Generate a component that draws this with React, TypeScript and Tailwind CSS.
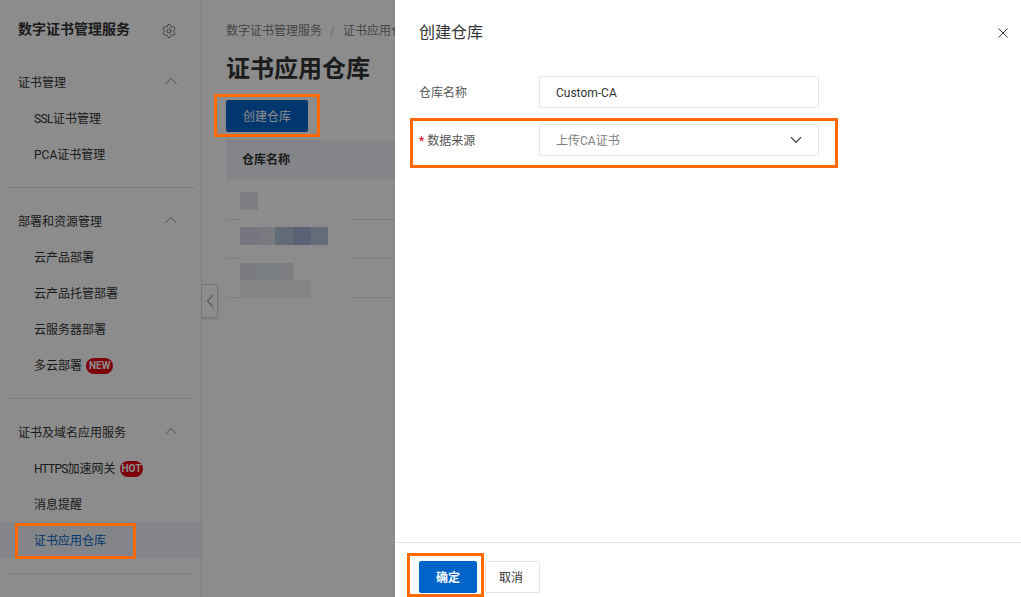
import React from "react";
import { Settings } from "lucide-react";

const font = { fontFamily: '"Roboto","Noto Sans CJK SC",sans-serif' };

function Up() {
  return (
    <svg width="12" height="8" viewBox="0 0 12 8" fill="none" stroke="#8a8a8a" strokeWidth="1" className="mb-[4px]">
      <path d="M0.5 7 L6 1.5 L11.5 7" />
    </svg>
  );
}

function Item({ label, active, badge, latin, tight }: { label: string; active?: boolean; badge?: string; latin?: string; tight?: string }) {
  return (
    <div className={`h-9 pt-[2px] flex items-center pl-[34px] text-[12px] ${active ? "bg-[#eff3f8] text-[#0064c8]" : "text-[#333]"}`}>
      <span>
        {latin && <span className={tight}>{latin}</span>}
        {label}
      </span>
      {badge && (
        <span className={`ml-[4px] h-[16px] rounded-full bg-[#e60012] text-white text-[10px] font-bold flex items-center leading-none ${badge === "HOT" ? "px-[2px]" : "px-[3px]"}`}>{badge}</span>
      )}
    </div>
  );
}

function Group({ title, children }: { title: string; children: React.ReactNode }) {
  return (
    <div>
      <div className="h-9 pt-[2px] flex items-center justify-between pl-[18px] pr-[24px] text-[12px] text-[#333]">
        <span>{title}</span>
        <Up />
      </div>
      {children}
    </div>
  );
}

function Divider() {
  return <div className="mx-[6px] h-px bg-[#e5e5e5] my-[15px]" />;
}

function Row({ children, pt, h }: { children: React.ReactNode; pt: string; h: string }) {
  return (
    <div className={`border-b border-[#e5e5e5] ${h}`}>
      <div className={`ml-[14px] w-[110px] h-[calc(100%+1px)] bg-white flex flex-col ${pt}`}>{children}</div>
    </div>
  );
}

export default function App() {
  return (
    <div className="relative w-full h-[597px] overflow-hidden bg-white flex" style={font}>
      <aside className="w-[202px] shrink-0 border-r border-[#e5e5e5] flex flex-col pt-[10px]">
        <div className="h-9 pt-[2px] flex items-center justify-between pl-[18px] pr-[24px] text-[14px] font-bold text-[#333]">
          <span>数字证书管理服务</span>
          <Settings size={16} color="#555" strokeWidth={1.2} className="mt-[4px]" />
        </div>
        <div className="h-[18px]" />
        <Group title="证书管理">
          <Item label="证书管理" latin="SSL" tight="tracking-[-0.6px]" />
          <Item label="证书管理" latin="PCA" />
        </Group>
        <Divider />
        <Group title="部署和资源管理">
          <Item label="云产品部署" />
          <Item label="云产品托管部署" />
          <Item label="云服务器部署" />
          <Item label="多云部署" badge="NEW" />
        </Group>
        <Divider />
        <Group title="证书及域名应用服务">
          <Item label="加速网关" latin="HTTPS" tight="tracking-[-0.8px]" badge="HOT" />
          <Item label="消息提醒" />
          <Item label="证书应用仓库" active />
        </Group>
        <Divider />
      </aside>

      <main className="flex-1 pl-[24px] pt-[22px] min-w-0">
        <div className="text-[12px] leading-[18px] text-[#808080] whitespace-nowrap">
          数字证书管理服务<span className="mx-[8px] text-[#c1c1c1]">/</span>证书应用仓库
        </div>
        <h1 className="mt-[11px] text-[24px] leading-[36px] font-bold text-[#333]">证书应用仓库</h1>
        <button className="mt-[13px] block w-[82px] h-[32px] pt-[2px] rounded-[2px] bg-[#0064c8] text-white text-[12px]">创建仓库</button>
        <div className="mt-[8px]">
          <div className="h-[40px] bg-[#eff3f8] flex items-center pl-[16px] text-[12px] font-bold text-[#333]">仓库名称</div>
          <Row pt="pt-[12px]" h="h-[40px]">
            <div className="w-[18px] h-[18px] bg-[#e3e5ec]" />
          </Row>
          <Row pt="pt-[7px]" h="h-[39px]">
            <div className="flex h-[18px]">
              <div className="w-[18px] bg-[#d7d9e6]" />
              <div className="w-[17px] bg-[#dadfe8]" />
              <div className="w-[18px] bg-[#b2c3db]" />
              <div className="w-[18px] bg-[#a3b5d5]" />
              <div className="w-[17px] bg-[#b5c6de]" />
            </div>
          </Row>
          <Row pt="pt-[4px]" h="h-[39px]">
            <div className="flex h-[17px] shrink-0">
              <div className="w-[18px] bg-[#e0e2e9]" />
              <div className="w-[17px] bg-[#dfe6ea]" />
              <div className="w-[18px] bg-[#e3e6ec]" />
            </div>
            <div className="w-[71px] h-[18px] shrink-0 bg-[#eef0f3]" />
          </Row>
        </div>
      </main>

      {/* dim layer */}
      <div className="absolute inset-0 bg-black/45" />

      {/* collapse handle */}
      <div className="absolute left-[202px] top-[284px] w-[16px] h-[34px] bg-[#8c8c8c] border border-[#777] border-l-0 rounded-r-[2px] flex items-center justify-center shadow-sm">
        <svg width="8" height="14" viewBox="0 0 8 14" fill="none" stroke="#666" strokeWidth="1.6">
          <path d="M7 1 L1.5 7 L7 13" />
        </svg>
      </div>

      {/* drawer */}
      <section className="absolute right-0 top-0 bottom-0 w-[626px] bg-white flex flex-col">
        <header className="h-[66px] flex items-center justify-between pl-[24px] pr-[12px]">
          <h2 className="text-[16px] text-[#333]">创建仓库</h2>
          <svg width="12" height="12" viewBox="0 0 12 12" fill="none" stroke="#333" strokeWidth="1">
            <path d="M1.5 1.5 L10.5 10.5 M10.5 1.5 L1.5 10.5" />
          </svg>
        </header>
        <div className="flex-1 pl-[24px] pt-[10px]">
          <div className="flex items-center h-[32px]">
            <label className="w-[120px] pt-[2px] text-[12px] text-[#555]">仓库名称</label>
            <div className="w-[280px] h-[32px] pt-[2px] border border-[#e5e5e5] rounded-[2px] flex items-center pl-[16px] text-[12px] text-[#333]">Custom-CA</div>
          </div>
          <div className="flex items-center h-[32px] mt-[16px]">
            <label className="w-[120px] pt-[2px] text-[12px] text-[#555]"><span className="text-[#e60012]">*</span> 数据来源</label>
            <div className="w-[280px] h-[32px] border border-[#e5e5e5] rounded-[2px] flex items-center justify-between px-[16px] text-[12px] text-[#808080]">
              <span className="pt-[2px]">上传CA证书</span>
              <svg width="12" height="8" viewBox="0 0 12 8" fill="none" stroke="#333" strokeWidth="1.2">
                <path d="M1 1.2 L6 6.5 L11 1.2" />
              </svg>
            </div>
          </div>
        </div>
        <footer className="h-[55px] border-t border-[#e5e5e5] pl-[24px] pt-[18px] flex gap-[8px]">
          <button className="w-[58px] h-[32px] pt-[2px] rounded-[2px] bg-[#0064c8] text-white text-[12px] font-bold">确定</button>
          <button className="w-[55px] h-[32px] pt-[2px] pr-[3px] rounded-[2px] border border-[#e5e5e5] bg-white text-[#333] text-[12px]">取消</button>
        </footer>
      </section>

      {/* annotations */}
      <div className="absolute left-[214px] top-[94px] w-[106px] h-[43px] border-[3px] border-[#ff6a00]" />
      <div className="absolute left-[15px] top-[523px] w-[121px] h-[36px] border-[3px] border-[#ff6a00]" />
      <div className="absolute left-[410px] top-[118px] w-[428px] h-[50px] border-[3px] border-[#ff6a00]" />
      <div className="absolute left-[407px] top-[553px] w-[77px] h-[44px] border-[3px] border-[#ff6a00]" />
    </div>
  );
}
